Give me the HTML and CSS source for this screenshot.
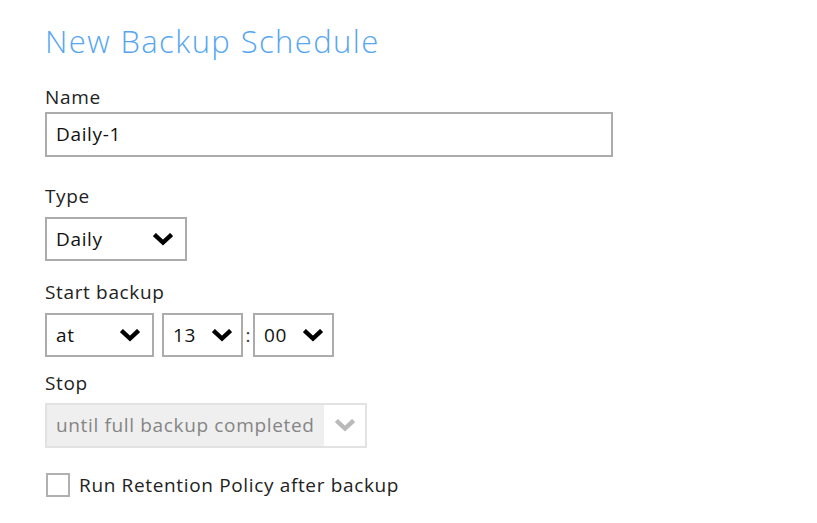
FILE: index.html
```html
<!DOCTYPE html>
<html lang="en">
<head>
<meta charset="utf-8">
<title>New Backup Schedule</title>
<link rel="stylesheet" href="styles.css">
</head>
<body>
<div class="page">
  <h1 class="title">New Backup Schedule</h1>

  <div class="label label-name">Name</div>
  <div class="text-input">Daily-1</div>

  <div class="label label-type">Type</div>
  <div class="select select-type">
    <span class="select-value">Daily</span>
    <svg class="chev" viewBox="0 0 20 13" width="20" height="13"><polyline points="3,3 10,9.5 17,3"/></svg>
  </div>

  <div class="label label-start">Start backup</div>
  <div class="time-row">
    <div class="select select-at">
      <span class="select-value">at</span>
      <svg class="chev" viewBox="0 0 20 13" width="20" height="13"><polyline points="3,3 10,9.5 17,3"/></svg>
    </div>
    <div class="select select-num">
      <span class="select-value">13</span>
      <svg class="chev" viewBox="0 0 20 13" width="20" height="13"><polyline points="3,3 10,9.5 17,3"/></svg>
    </div>
    <span class="colon">:</span>
    <div class="select select-num">
      <span class="select-value">00</span>
      <svg class="chev" viewBox="0 0 20 13" width="20" height="13"><polyline points="3,3 10,9.5 17,3"/></svg>
    </div>
  </div>

  <div class="label label-stop">Stop</div>
  <div class="select-disabled">
    <span class="disabled-value">until full backup completed</span>
    <span class="disabled-arrow">
      <svg class="chev chev-light" viewBox="0 0 20 13" width="20" height="13"><polyline points="3,3 10,9.5 17,3"/></svg>
    </span>
  </div>

  <div class="check-row">
    <span class="checkbox"></span>
    <span class="check-label">Run Retention Policy after backup</span>
  </div>
</div>
</body>
</html>
```

FILE: styles.css
```css
* { box-sizing: border-box; }

html, body {
  margin: 0;
  padding: 0;
  background: #ffffff;
}

body {
  font-family: "Open Sans", "Liberation Sans", sans-serif;
  color: #222222;
}

.page {
  padding: 21px 0 0 45px;
}

.title {
  margin: 0;
  font-size: 31px;
  line-height: 40px;
  font-weight: 300;
  letter-spacing: 1.4px;
  color: #56a6f3;
  height: 40px;
}

.label {
  font-size: 19px;
  line-height: 22px;
  letter-spacing: 0.65px;
  height: 22px;
  color: #222222;
}

.label-name { margin-top: 25px; }
.label-type { margin-top: 28px; }
.label-start { margin-top: 20px; }
.label-stop { margin-top: 15px; }

.text-input {
  margin-top: 4px;
  width: 568px;
  height: 45px;
  border: 2px solid #acacac;
  padding-left: 9px;
  font-size: 19px;
  letter-spacing: 0.65px;
  line-height: 41px;
  color: #111111;
}

.select {
  display: flex;
  align-items: center;
  justify-content: space-between;
  height: 44px;
  border: 2px solid #acacac;
  padding: 0 12px 0 9px;
  font-size: 19px;
  letter-spacing: 0.65px;
  color: #111111;
}

.select-type {
  margin-top: 10px;
  width: 142px;
}

.time-row {
  margin-top: 10px;
  display: flex;
  align-items: center;
}

.select-at {
  width: 109px;
  margin-right: 8px;
}

.select-num {
  width: 81px;
  padding-right: 9px;
}

.colon {
  width: 10px;
  text-align: center;
  font-size: 19px;
  color: #333333;
}

.chev {
  display: block;
  flex: none;
}

.chev polyline {
  fill: none;
  stroke: #000000;
  stroke-width: 4.4;
  stroke-linejoin: miter;
  stroke-linecap: square;
}

.chev-light polyline {
  stroke: #b9b9b9;
}

.select-disabled {
  margin-top: 9px;
  width: 322px;
  height: 45px;
  border: 2px solid #e2e2e2;
  display: flex;
  font-size: 19px;
  letter-spacing: 0.65px;
}

.disabled-value {
  flex: 1;
  background: #efefef;
  color: #858585;
  padding-left: 9px;
  line-height: 41px;
  white-space: nowrap;
}

.disabled-arrow {
  width: 41px;
  background: #ffffff;
  display: flex;
  align-items: center;
  justify-content: center;
}

.check-row {
  margin-top: 24px;
  display: flex;
  align-items: center;
  height: 25px;
}

.checkbox {
  width: 24px;
  height: 24px;
  border: 2px solid #b0b0b0;
  background: #ffffff;
  margin-left: 1px;
  margin-right: 9px;
}

.check-label {
  font-size: 19px;
  letter-spacing: 0.65px;
  color: #222222;
}
```
